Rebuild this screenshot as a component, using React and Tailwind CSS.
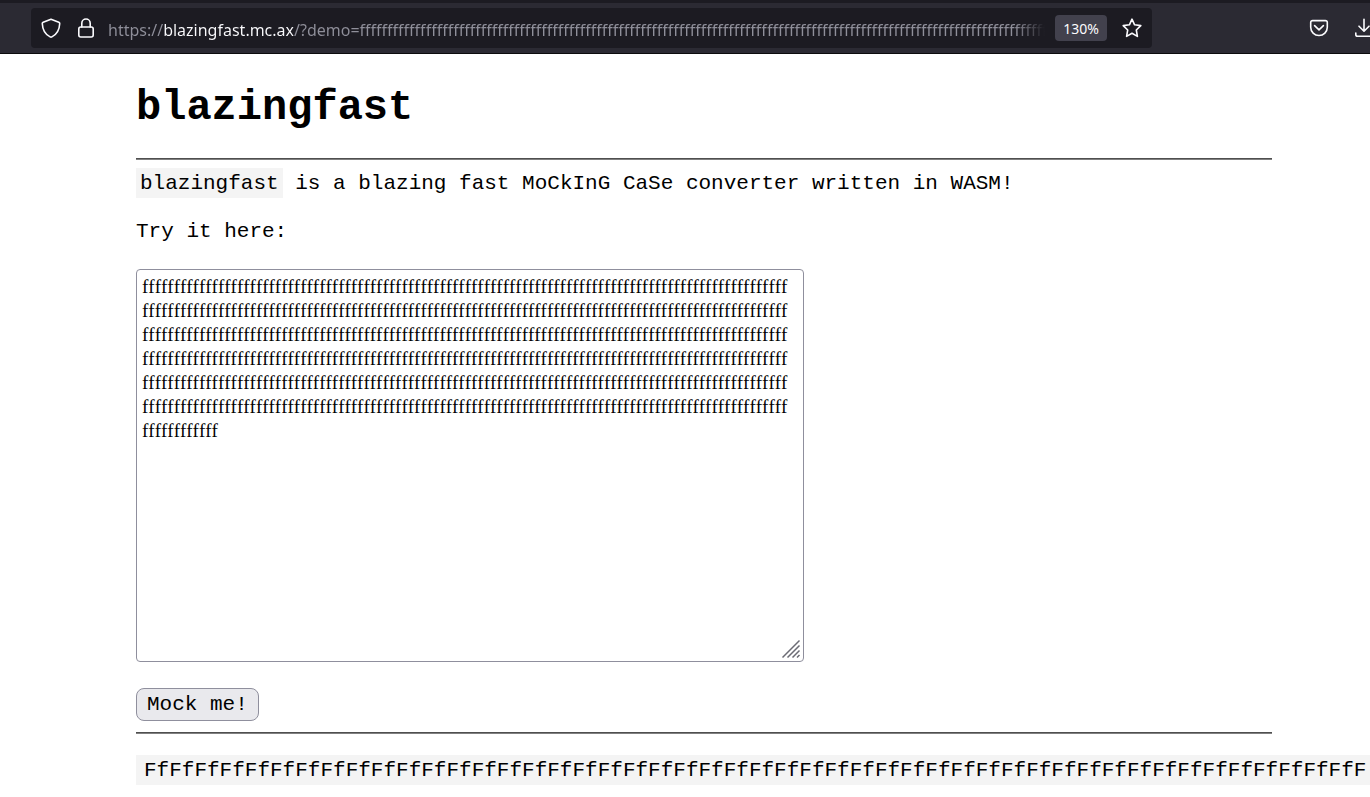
import React, { useState } from 'react';

const DEMO = 'f'.repeat(624);
const URL_TEXT = `https://blazingfast.mc.ax/?demo=${DEMO}`;

const mock = (text) =>
  text
    .split('')
    .map((c, i) => (i % 2 === 0 ? c.toUpperCase() : c.toLowerCase()))
    .join('');

const Icon = ({ children }) => (
  <svg
    width="20"
    height="20"
    viewBox="0 0 20 20"
    fill="none"
    stroke="#fbfbfe"
    strokeWidth="1.6"
    strokeLinecap="round"
    strokeLinejoin="round"
  >
    {children}
  </svg>
);

const AddressBar = () => (
  <header className="flex h-[54px] items-center overflow-hidden border-t-3 border-b border-t-[#1c1b22] border-b-[#0c0c0d] bg-[#2b2a33] pl-[31px]">
    <div className="flex h-10 min-w-0 flex-1 items-center rounded-sm bg-[#1c1b22] pr-2.5 pl-2.5">
      <button type="button" aria-label="Tracking protection" className="shrink-0">
        <Icon>
          <path d="M10 1.2 L17.8 4.3 C18.5 4.6 18.8 5 18.7 5.8 C18.4 12.2 15.6 16.6 10.9 18.9 C10.3 19.2 9.7 19.2 9.1 18.9 C4.4 16.6 1.6 12.2 1.3 5.8 C1.2 5 1.5 4.6 2.2 4.3 Z" />
        </Icon>
      </button>
      <button type="button" aria-label="Site information" className="ml-[15px] shrink-0">
        <Icon>
          <rect x="2.8" y="9" width="14.4" height="10" rx="2" />
          <path d="M5.8 9 V5.2 A4.2 4.2 0 0 1 14.2 5.2 V9" />
        </Icon>
      </button>
      <input
        type="text"
        aria-label="Address"
        defaultValue={URL_TEXT}
        spellCheck={false}
        className="ml-3 h-8 min-w-0 flex-1 bg-[linear-gradient(90deg,#8f8f9a_55px,#fbfbfe_55px,#fbfbfe_186px,#8f8f9a_186px,#8f8f9a_calc(100%-30px),transparent)] bg-clip-text pt-1 font-['Noto_Sans','Open_Sans',sans-serif] text-base text-transparent outline-none"
      />
      <button
        type="button"
        className="ml-2.5 h-[26px] w-[52px] shrink-0 rounded-sm bg-[#42414d] pt-0.5 font-['Noto_Sans','Open_Sans',sans-serif] text-sm text-[#fbfbfe]"
      >
        130%
      </button>
      <button type="button" aria-label="Bookmark this page" className="ml-[15px] shrink-0">
        <Icon>
          <path d="M10 1.2 L12.6 6.8 L18.8 7.6 L14.3 12 L15.4 18.4 L10 15.3 L4.6 18.4 L5.7 12 L1.2 7.6 L7.4 6.8 Z" />
        </Icon>
      </button>
    </div>
    <button type="button" aria-label="Save to Pocket" className="ml-[157px] shrink-0">
      <Icon>
        <path d="M3.5 2.6 H16.5 A1.8 1.8 0 0 1 18.3 4.4 V9.2 A8.3 8.3 0 0 1 1.7 9.2 V4.4 A1.8 1.8 0 0 1 3.5 2.6 Z" />
        <path d="M5.6 7.6 L10 11.8 L14.4 7.6" />
      </Icon>
    </button>
    <button type="button" aria-label="Downloads" className="-mr-1 ml-[25px] shrink-0">
      <Icon>
        <path d="M10 1.2 V13 M5 8.2 L10 13.2 L15 8.2" />
        <path d="M1.8 15 V16.4 A1.8 1.8 0 0 0 3.6 18.2 H16.4 A1.8 1.8 0 0 0 18.2 16.4 V15" />
      </Icon>
    </button>
  </header>
);

const Rule = () => <hr className="h-0.5 border-t border-b border-t-[#4f4f4f] border-b-[#808080]" />;

const App = () => {
  const [text, setText] = useState(DEMO);
  const [result, setResult] = useState(mock(DEMO));

  return (
    <div className="min-h-screen overflow-hidden bg-white text-black">
      <AddressBar />
      <main className="mr-[98px] ml-[136px] font-['Liberation_Mono',monospace] text-[21px] leading-6">
        <h1 className="pt-[30px] pb-[26px] text-[42px] leading-12 font-bold">blazingfast</h1>
        <Rule />
        <p className="mt-2 leading-7">
          <code className="inline-block bg-[#f4f4f4] px-1 pt-0.5 font-['Liberation_Mono',monospace]">blazingfast</code>{' '}
          is a blazing fast MoCkInG CaSe converter written in WASM!
        </p>
        <label htmlFor="demo" className="mt-[22px] block">
          Try it here:
        </label>
        <div className="relative mt-[25px] w-[668px]">
          <textarea
            id="demo"
            value={text}
            onChange={(e) => setText(e.target.value)}
            spellCheck={false}
            className="block h-[393px] w-full resize-none rounded-sm border border-[#8f8f9d] bg-white py-[5px] pr-3 pl-[5px] font-['Liberation_Serif',serif] text-[19px] leading-6 break-all outline-none [font-kerning:none] [font-variant-ligatures:none]"
          />
          <svg
            className="pointer-events-none absolute right-[3px] bottom-[3px]"
            width="20"
            height="20"
            viewBox="0 0 20 20"
            stroke="#6b6b74"
            strokeWidth="1.5"
          >
            <path d="M1.5 18.5 L18.5 1.5 M6.5 18.5 L18.5 6.5 M11.5 18.5 L18.5 11.5 M16 18.5 L18.5 16" />
          </svg>
        </div>
        <button
          type="button"
          onClick={() => setResult(mock(text))}
          className="mt-[26px] mb-[11px] block h-[33px] rounded-lg border border-[#8f8f9d] bg-[#e9e9ed] px-[10px]"
        >
          Mock me!
        </button>
        <Rule />
        <pre className="mt-[21px] w-screen bg-[#f4f4f4] px-2 pt-0.5 font-['Liberation_Mono',monospace] leading-7">
          {result.slice(0, 97)}
        </pre>
      </main>
    </div>
  );
};

export default App;
